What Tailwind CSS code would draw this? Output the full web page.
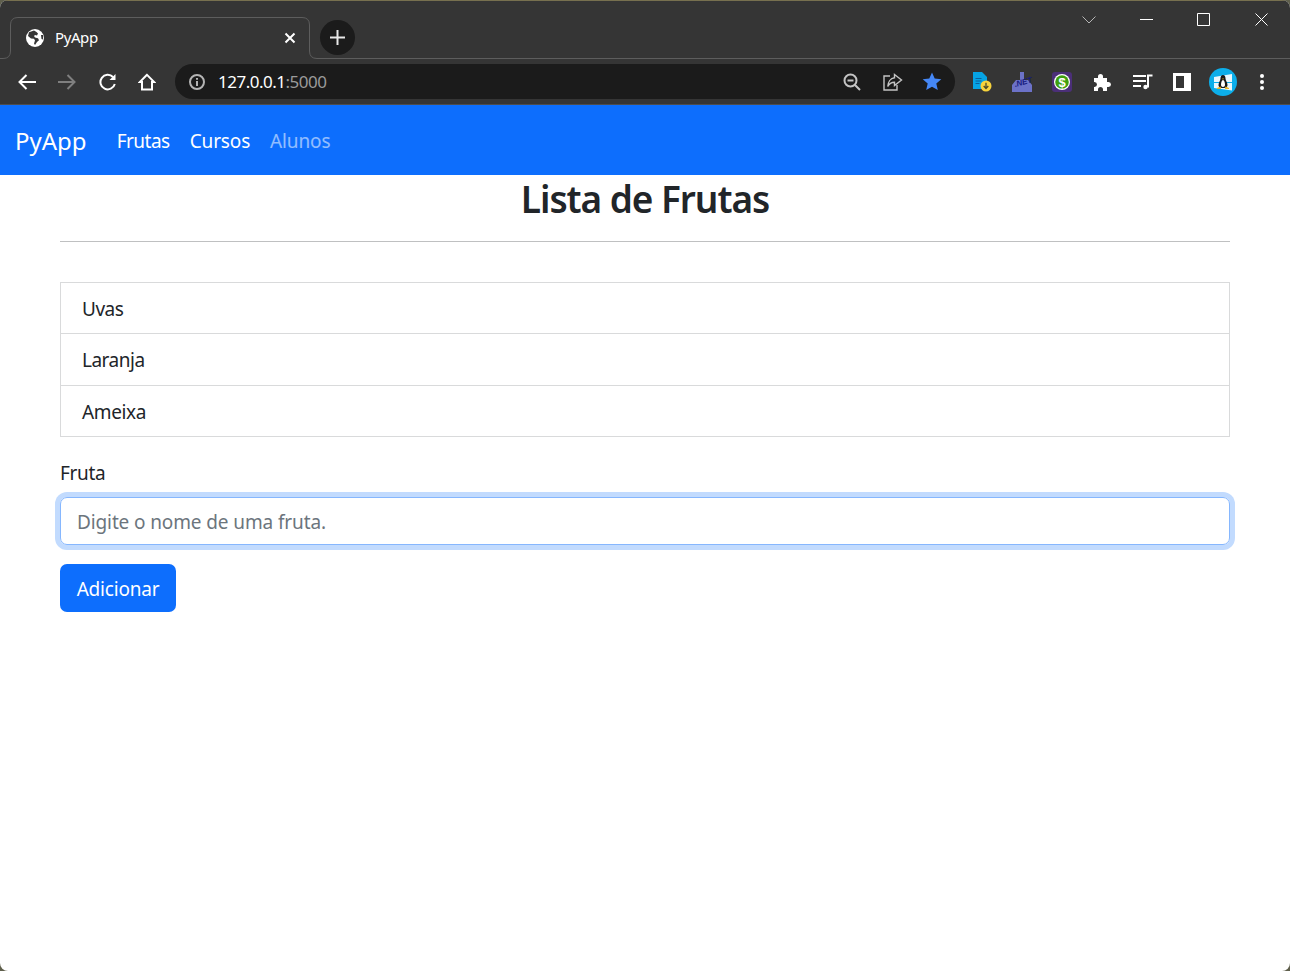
<!DOCTYPE html>
<html lang="pt-br">

<head>
  <meta charset="UTF-8">
  <title>PyApp</title>
  <script src="https://cdn.jsdelivr.net/npm/@tailwindcss/browser@4"></script>
</head>

<body class="bg-[#5f5f4c] font-['Noto_Sans',sans-serif] text-[#212529]">
  <div class="w-[1290px] h-[971px] rounded-[8px] overflow-hidden bg-white flex flex-col">
    <!-- barra de abas -->
    <div class="h-[59px] shrink-0 bg-[#353535] border-t border-[#77704f] flex pl-[11px] pt-[16px]">
      <div class="relative w-[299px] h-[42px] flex items-center pl-[15px] pr-[14px] text-[15px] text-white">
        <svg class="absolute left-[-11px] top-0 overflow-visible" width="330" height="42" fill="none" stroke="#5d5d5d">
          <path d="M0 41.5H3Q10.5 41.5 10.5 34V8Q10.5 .5 18 .5H302Q309.5 .5 309.5 8V34Q309.5 41.5 317 41.5H1290" />
        </svg>
        <svg class="mr-[11px]" width="18" height="18" viewBox="0 0 18 18">
          <circle cx="9" cy="9" r="9" fill="#fff" />
          <path d="M8 1.500 3 3.200 2 7l3 2.500 3 .3 1 1.700-1 3 1 1.500 2-3 2-1.700-1-2-3-.8-1-1.500 1-1 2 .5 1-2-1.500-1.500zM15 6h2.200L17 10.500 15.500 10z" fill="#353535" />
        </svg>
        <span class="pb-[2px] tracking-[-0.4px]">PyApp</span>
        <svg class="ml-auto" width="12" height="12" viewBox="0 0 12 12" stroke="#fff" stroke-width="2">
          <path d="M1.500 1.500l9 9M10.500 1.500l-9 9" />
        </svg>
      </div>
      <div class="relative ml-[10px] mt-[3px] w-[35px] h-[35px] rounded-full bg-[#1b1b1b] flex items-center justify-center">
        <svg width="15" height="15" viewBox="0 0 15 15" stroke="#e8e8e8" stroke-width="2">
          <path d="M7.500 0v15M0 7.500h15" />
        </svg>
      </div>
      <div class="relative ml-auto -mt-[16px] flex items-start text-white">
        <div class="w-[58px] h-[38px] flex items-center justify-center">
          <svg width="14" height="8" viewBox="0 0 14 8" fill="none" stroke="#b5b5b5"><path d="M.500.500l6.500 6.500 6.500-6.500" /></svg>
        </div>
        <div class="w-[57px] h-[37px] flex items-center justify-center">
          <svg width="13" height="1" viewBox="0 0 13 1"><path d="M0 0h13v1H0z" fill="#fff" /></svg>
        </div>
        <div class="w-[58px] h-[37px] flex items-center justify-center pr-[1px]">
          <svg width="13" height="13" viewBox="0 0 13 13" fill="none" stroke="#fff"><path d="M.500.500h12v12H.500z" /></svg>
        </div>
        <div class="w-[57px] h-[37px] flex items-center justify-center">
          <svg width="13" height="13" viewBox="0 0 13 13" fill="none" stroke="#fff"><path d="M.500.500l12 12M12.500.500l-12 12" /></svg>
        </div>
      </div>
    </div>

    <!-- barra de endereco -->
    <div class="h-[46px] shrink-0 bg-[#353535] border-b border-[#4d4d4d] flex items-center pl-[7px]">
      <div class="w-10 flex justify-center">
        <svg width="18" height="16" viewBox="0 0 18 16" fill="none" stroke="#fff" stroke-width="2"><path d="M18 8H2M8.500 1 1.500 8l7 7" /></svg>
      </div>
      <div class="w-10 flex justify-center">
        <svg width="18" height="16" viewBox="0 0 18 16" fill="none" stroke="#7f7f7f" stroke-width="2"><path d="M0 8h16M9.500 1l7 7-7 7" /></svg>
      </div>
      <div class="w-10 flex justify-center pl-[1px]">
        <svg width="18" height="18" viewBox="0 0 18 18" fill="none" stroke="#fff" stroke-width="2"><path d="M15.800 11A7.300 7.300 0 1 1 14 4" /><path d="M16.500 1v6h-6z" fill="#fff" stroke="none" /></svg>
      </div>
      <div class="w-10 flex justify-center">
        <svg width="18" height="18" viewBox="0 0 18 18" fill="none" stroke="#fff" stroke-width="2"><path d="M9 1.800 1.800 9H4v7.500h10V9h2.200z" /></svg>
      </div>
      <div class="ml-[8px] w-[780px] h-[35px] rounded-full bg-[#1b1b1b] flex items-center pl-[13px] pr-[3px]">
        <svg width="18" height="18" viewBox="0 0 18 18" fill="none" stroke="#b4b4b4" stroke-width="2"><circle cx="9" cy="9" r="7" /><path d="M9 8v5M9 5v1.800" /></svg>
        <span class="ml-[12px] text-[17px] text-white tracking-[-0.5px]">127.0.0.1<span class="text-[#9a9a9a]">:5000</span></span>
        <div class="ml-auto w-10 flex justify-center">
          <svg width="18" height="18" viewBox="0 0 18 18" fill="none" stroke="#c4c4c4" stroke-width="2"><circle cx="7.500" cy="7.500" r="6" /><path d="M4.500 7.500h6M12 12l5 5" /></svg>
        </div>
        <div class="w-10 flex justify-center pl-[1px]">
          <svg width="20" height="18" viewBox="0 0 20 18" fill="none" stroke="#c4c4c4" stroke-width="1.400"><path d="M7 3H1v14h13v-5" /><path d="M11.500 1.500 18.500 7l-7 5.500V9.300C8 9.300 6 11 4.800 13.500 5 9 7.500 5.200 11.500 4.800z" /></svg>
        </div>
        <div class="w-10 flex justify-center">
          <svg width="20" height="19" viewBox="0 0 20 19"><path d="M10 .5l2.700 6.100 6.600.6-5 4.400 1.500 6.500L10 14.700l-5.800 3.400 1.500-6.500-5-4.400 6.600-.6z" fill="#4587f5" /></svg>
        </div>
      </div>
      <div class="ml-[7px] w-10 flex justify-center pl-[1px]">
        <svg width="19" height="20" viewBox="0 0 19 20">
          <path d="M0 0h9l5 5v12H0z" fill="#06a3e4" />
          <path d="M2.500 6.500h6M2.500 9h6M2.500 11.500h4" stroke="#0a5f9c" />
          <circle cx="13" cy="14" r="5.500" fill="#f7d33c" />
          <path d="M13 10.800v5.700M10.700 14l2.300 2.500 2.300-2.500" fill="none" stroke="#4b4b2a" stroke-width="1.300" />
        </svg>
      </div>
      <div class="w-10 flex justify-center">
        <svg class="overflow-visible" width="20" height="20" viewBox="0 0 20 20">
          <path d="M8 0h4v9h-4zM4 8h12l4 5H0zM0 13h20v7H0z" fill="#6c72c8" />
          <text x="2" y="13" font-size="8" font-family="Liberation Sans" font-weight="700" font-style="italic" fill="#161a80" transform="rotate(-16 10 10)">.NET</text>
        </svg>
      </div>
      <div class="w-10 flex justify-center">
        <svg width="20" height="20" viewBox="0 0 20 20">
          <rect width="20" height="20" rx="3" fill="#4b2f78" />
          <circle cx="10" cy="10" r="8" fill="#fff" />
          <circle cx="10" cy="10" r="6.800" fill="#3f9f0f" />
          <text x="10" y="14.500" text-anchor="middle" font-size="13" font-family="Liberation Sans" font-weight="700" fill="#fff">$</text>
        </svg>
      </div>
      <div class="w-10 flex justify-center">
        <svg width="18" height="18" viewBox="0 0 18 18"><path d="M1 5h4V3.500a2.500 2.500 0 0 1 5 0V5h4v4h1.500a2.500 2.500 0 0 1 0 5H14v4h-4v-1.500a2.500 2.500 0 0 0-5 0V18H1v-4h.5a2.500 2.500 0 0 0 0-5H1z" fill="#fff" /></svg>
      </div>
      <div class="w-10 flex justify-center pl-[1px]">
        <svg width="20" height="16" viewBox="0 0 20 16" fill="none" stroke="#fff" stroke-width="2">
          <path d="M0 2h13M0 7h13M0 12h8M15 13.500V1.500h4.500" />
          <circle cx="12.500" cy="13" r="2.200" fill="#fff" stroke="none" />
        </svg>
      </div>
      <div class="w-10 flex justify-center">
        <svg width="18" height="18" viewBox="0 0 18 18"><path fill-rule="evenodd" d="M0 0h18v18H0zM3 3v12h8V3z" fill="#fff" /></svg>
      </div>
      <div class="w-10 flex justify-center pl-[1px]">
        <svg width="28" height="28" viewBox="0 0 28 28">
          <circle cx="14" cy="14" r="14" fill="#0caeea" />
          <path d="M5 9l18-3v8H5zM5 15h18v7.500L5 20z" fill="#eaf7fd" />
          <path d="M14 7c-1.700 0-2.500 1.500-2.500 3.500 0 2-2 4-2 6.500 0 1.500.8 3 4.500 3s4.500-1.500 4.500-3c0-2.500-2-4.500-2-6.500C16.500 8.500 15.700 7 14 7z" fill="#1a1a1a" />
          <path d="M14 12c-1.200 0-2 2.500-2 5s4 2.500 4 0-.8-5-2-5z" fill="#fff" />
          <path d="M8 20l3.500-1.500.5 2.500H8zM20 20l-3.500-1.500-.5 2.500h4z" fill="#eeb422" />
          <path d="M13 10.500h2l-1 1.200z" fill="#eeb422" />
        </svg>
      </div>
      <div class="w-10 flex justify-center">
        <svg width="4" height="16" viewBox="0 0 4 16" fill="#fff"><circle cx="2" cy="2" r="2" /><circle cx="2" cy="8" r="2" /><circle cx="2" cy="14" r="2" /></svg>
      </div>
    </div>

    <!-- navbar -->
    <nav class="h-[70px] shrink-0 bg-[#0d6efd] flex items-center pl-[15px] pt-[2px]">
      <a class="text-[24px] text-white mr-[30px]">PyApp</a>
      <a class="text-[19px] text-white tracking-[-0.5px] mr-[20px]">Frutas</a>
      <a class="text-[19px] text-white tracking-[-0.15px] mr-[20px]">Cursos</a>
      <a class="text-[19px] text-white/55 tracking-[-0.15px]">Alunos</a>
    </nav>

    <!-- conteudo -->
    <main class="px-[60px] flex flex-col">
      <h1 class="text-[37px] leading-[48px] font-semibold text-center tracking-[-1.05px]">Lista de Frutas</h1>
      <hr class="mt-[18px] border-[#bfc0c1]">
      <ul class="mt-[40px] border border-[#d9dadb]">
        <li class="h-[51px] flex items-center px-[21px] pt-[2px] text-[19px] tracking-[-0.5px] border-b border-[#d9dadb]">Uvas</li>
        <li class="h-[52px] flex items-center px-[21px] pt-[2px] text-[19px] tracking-[-0.5px] border-b border-[#d9dadb]">Laranja</li>
        <li class="h-[50px] flex items-center px-[21px] pt-[2px] text-[19px] tracking-[-0.35px]">Ameixa</li>
      </ul>
      <label class="mt-[21px] text-[19px] leading-[30px] tracking-[-0.35px]">Fruta</label>
      <input class="mt-[9px] h-[48px] rounded-[7px] border border-[#86b7fe] ring-[5px] ring-[#c2dbfe] px-[16px] pt-[2px] text-[19px] tracking-[-0.12px] placeholder:text-[#6c757d]" placeholder="Digite o nome de uma fruta.">
      <button class="mt-[19px] w-[116px] h-[48px] rounded-[7px] bg-[#0d6efd] pt-[2px] text-white text-[19px] tracking-[-0.2px]">Adicionar</button>
    </main>
  </div>
</body>

</html>
